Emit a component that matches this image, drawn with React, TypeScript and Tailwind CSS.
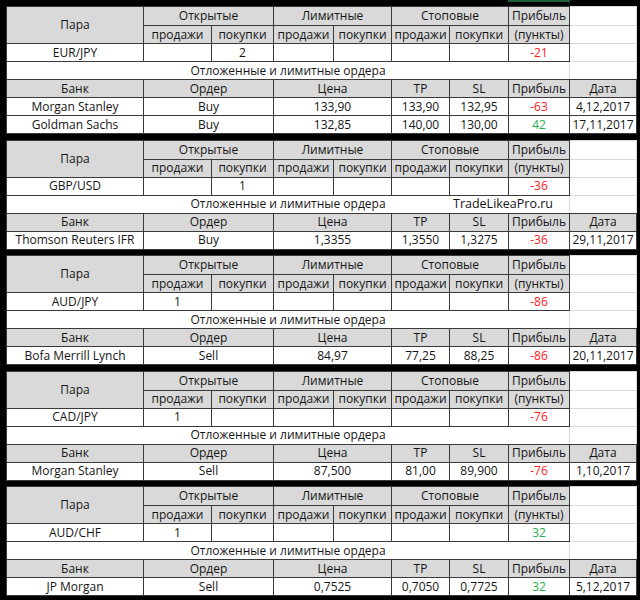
type Order = {
  bank: string;
  order: string;
  price: string;
  tp: string;
  sl: string;
  profit: number;
  date: string;
};

type Pair = {
  pair: string;
  openSell: string;
  openBuy: string;
  profit: number;
  watermark?: boolean;
  orders: Order[];
};

const pairs: Pair[] = [
  {
    pair: "EUR/JPY",
    openSell: "",
    openBuy: "2",
    profit: -21,
    orders: [
      { bank: "Morgan Stanley", order: "Buy", price: "133,90", tp: "133,90", sl: "132,95", profit: -63, date: "4,12,2017" },
      { bank: "Goldman Sachs", order: "Buy", price: "132,85", tp: "140,00", sl: "130,00", profit: 42, date: "17,11,2017" },
    ],
  },
  {
    pair: "GBP/USD",
    openSell: "",
    openBuy: "1",
    profit: -36,
    watermark: true,
    orders: [
      { bank: "Thomson Reuters IFR", order: "Buy", price: "1,3355", tp: "1,3550", sl: "1,3275", profit: -36, date: "29,11,2017" },
    ],
  },
  {
    pair: "AUD/JPY",
    openSell: "1",
    openBuy: "",
    profit: -86,
    orders: [
      { bank: "Bofa Merrill Lynch", order: "Sell", price: "84,97", tp: "77,25", sl: "88,25", profit: -86, date: "20,11,2017" },
    ],
  },
  {
    pair: "CAD/JPY",
    openSell: "1",
    openBuy: "",
    profit: -76,
    orders: [
      { bank: "Morgan Stanley", order: "Sell", price: "87,500", tp: "81,00", sl: "89,900", profit: -76, date: "1,10,2017" },
    ],
  },
  {
    pair: "AUD/CHF",
    openSell: "1",
    openBuy: "",
    profit: 32,
    orders: [
      { bank: "JP Morgan", order: "Sell", price: "0,7525", tp: "0,7050", sl: "0,7725", profit: 32, date: "5,12,2017" },
    ],
  },
];

// excel-ish cells
const cell = "p-0 text-center align-middle leading-none whitespace-nowrap border border-[#3a3a3a]";
const head = cell + " bg-[#d9d9d9]";
const blank = "p-0 bg-white border border-[#d9d9d9]";

function Profit({ value }: { value: number }) {
  return <span className={value < 0 ? "text-[#ff1a1a]" : "text-[#1fae54]"}>{value}</span>;
}

function Block({ data }: { data: Pair }) {
  return (
    <table className="table-fixed border-collapse w-[630px] bg-white">
      <colgroup>
        <col className="w-[137px]" />
        <col className="w-[68px]" />
        <col className="w-[62px]" />
        <col className="w-[60px]" />
        <col className="w-[58px]" />
        <col className="w-[58px]" />
        <col className="w-[59px]" />
        <col className="w-[61px]" />
        <col className="w-[67px]" />
      </colgroup>
      <tbody>
        <tr className="h-[19px]">
          <td rowSpan={2} className={head}>Пара</td>
          <td colSpan={2} className={head}>Открытые</td>
          <td colSpan={2} className={head}>Лимитные</td>
          <td colSpan={2} className={head}>Стоповые</td>
          <td className={head}>Прибыль</td>
          <td className={blank} />
        </tr>
        <tr className="h-[18px]">
          <td className={head}>продажи</td>
          <td className={head}>покупки</td>
          <td className={head}>продажи</td>
          <td className={head}>покупки</td>
          <td className={head}>продажи</td>
          <td className={head}>покупки</td>
          <td className={head}>(пункты)</td>
          <td className={blank} />
        </tr>
        <tr className="h-[18px]">
          <td className={cell}>{data.pair}</td>
          <td className={cell}>{data.openSell}</td>
          <td className={cell}>{data.openBuy}</td>
          <td className={cell} />
          <td className={cell} />
          <td className={cell} />
          <td className={cell} />
          <td className={cell}>
            <Profit value={data.profit} />
          </td>
          <td className={blank} />
        </tr>
        <tr className="h-[18px]">
          <td
            colSpan={8}
            className="relative p-0 text-center align-middle leading-none whitespace-nowrap border border-[#3a3a3a] border-r-[#d9d9d9]"
          >
            Отложенные и лимитные ордера
            {data.watermark && (
              <span className="absolute left-[446px] top-1/2 -translate-y-1/2 text-[12.5px]">TradeLikeaPro.ru</span>
            )}
          </td>
          <td className="p-0 bg-white border border-[#d9d9d9] border-b-[#3a3a3a]" />
        </tr>
        <tr className="h-[18px]">
          <td className={head}>Банк</td>
          <td colSpan={2} className={head}>Ордер</td>
          <td colSpan={2} className={head}>Цена</td>
          <td className={head}>TP</td>
          <td className={head}>SL</td>
          <td className={head}>Прибыль</td>
          <td className={head}>Дата</td>
        </tr>
        {data.orders.map((o) => (
          <tr key={o.bank + o.date} className="h-[18px]">
            <td className={cell}>{o.bank}</td>
            <td colSpan={2} className={cell}>{o.order}</td>
            <td colSpan={2} className={cell}>{o.price}</td>
            <td className={cell}>{o.tp}</td>
            <td className={cell}>{o.sl}</td>
            <td className={cell}>
              <Profit value={o.profit} />
            </td>
            <td className={cell}>{o.date}</td>
          </tr>
        ))}
      </tbody>
    </table>
  );
}

export default function App() {
  return (
    <div className="relative w-[640px] h-[600px] overflow-hidden bg-black pt-[6px] pl-[6px] flex flex-col gap-[5.5px] font-['Open_Sans',sans-serif] text-[12px] text-[#151515]">
      {/* selected column marker from the sheet */}
      <div className="absolute left-[508px] top-0 h-[2px] w-[62px] bg-[#1f5c3a]" />
      {pairs.map((p) => (
        <Block key={p.pair} data={p} />
      ))}
    </div>
  );
}
